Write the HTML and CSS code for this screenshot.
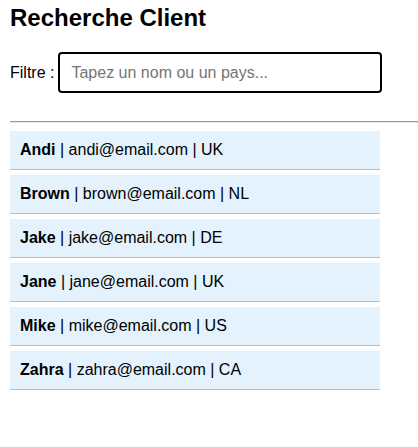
FILE: index.html
```html
<!DOCTYPE html>
<html lang="fr">
<head>
<meta charset="utf-8">
<title>Recherche Client</title>
<link rel="stylesheet" href="styles.css">
</head>
<body>
<div class="app">
  <h1 class="title">Recherche Client</h1>
  <div class="filter">
    <label class="filter-label" for="q">Filtre :</label>
    <input class="filter-input" id="q" type="text" placeholder="Tapez un nom ou un pays..." autofocus>
  </div>
  <hr class="sep">
  <ul class="list">
    <li class="item"><strong>Andi</strong> | andi@email.com | UK</li>
    <li class="item"><strong>Brown</strong> | brown@email.com | NL</li>
    <li class="item"><strong>Jake</strong> | jake@email.com | DE</li>
    <li class="item"><strong>Jane</strong> | jane@email.com | UK</li>
    <li class="item"><strong>Mike</strong> | mike@email.com | US</li>
    <li class="item"><strong>Zahra</strong> | zahra@email.com | CA</li>
  </ul>
</div>
</body>
</html>
```
FILE: styles.css
```css
html, body {
  margin: 0;
  padding: 0;
  background: #fff;
}
body {
  font-family: "Liberation Sans", Arial, sans-serif;
  font-size: 16px;
  color: #000;
}
.app {
  padding-left: 10px;
}
.title {
  margin: 4px 0 0;
  font-size: 24px;
  line-height: 28px;
  font-weight: bold;
}
.filter {
  display: flex;
  align-items: center;
  gap: 4px;
  margin-top: 20px;
}
.filter-label {
  line-height: 18px;
}
.filter-input {
  box-sizing: border-box;
  width: 324px;
  height: 41px;
  padding: 0 11px;
  border: 2px solid #000;
  border-radius: 4px;
  outline: none;
  font-family: "Liberation Sans", Arial, sans-serif;
  font-size: 16px;
  color: #000;
  caret-color: #000;
  background: #fff;
}
.filter-input::placeholder {
  color: #757575;
}
.sep {
  margin: 28px 0 0;
  height: 0;
  border: 0;
  border-top: 1px solid #9a9a9a;
  border-bottom: 1px solid #e6e6e6;
}
.list {
  list-style: none;
  margin: 8px 0 0;
  padding: 0;
  width: 370px;
}
.item {
  background: #e3f2fd;
  border-bottom: 1px solid #90caf9;
  padding: 10px 10px;
  line-height: 18px;
  margin-bottom: 5px;
}
.item strong {
  font-weight: bold;
}
```
